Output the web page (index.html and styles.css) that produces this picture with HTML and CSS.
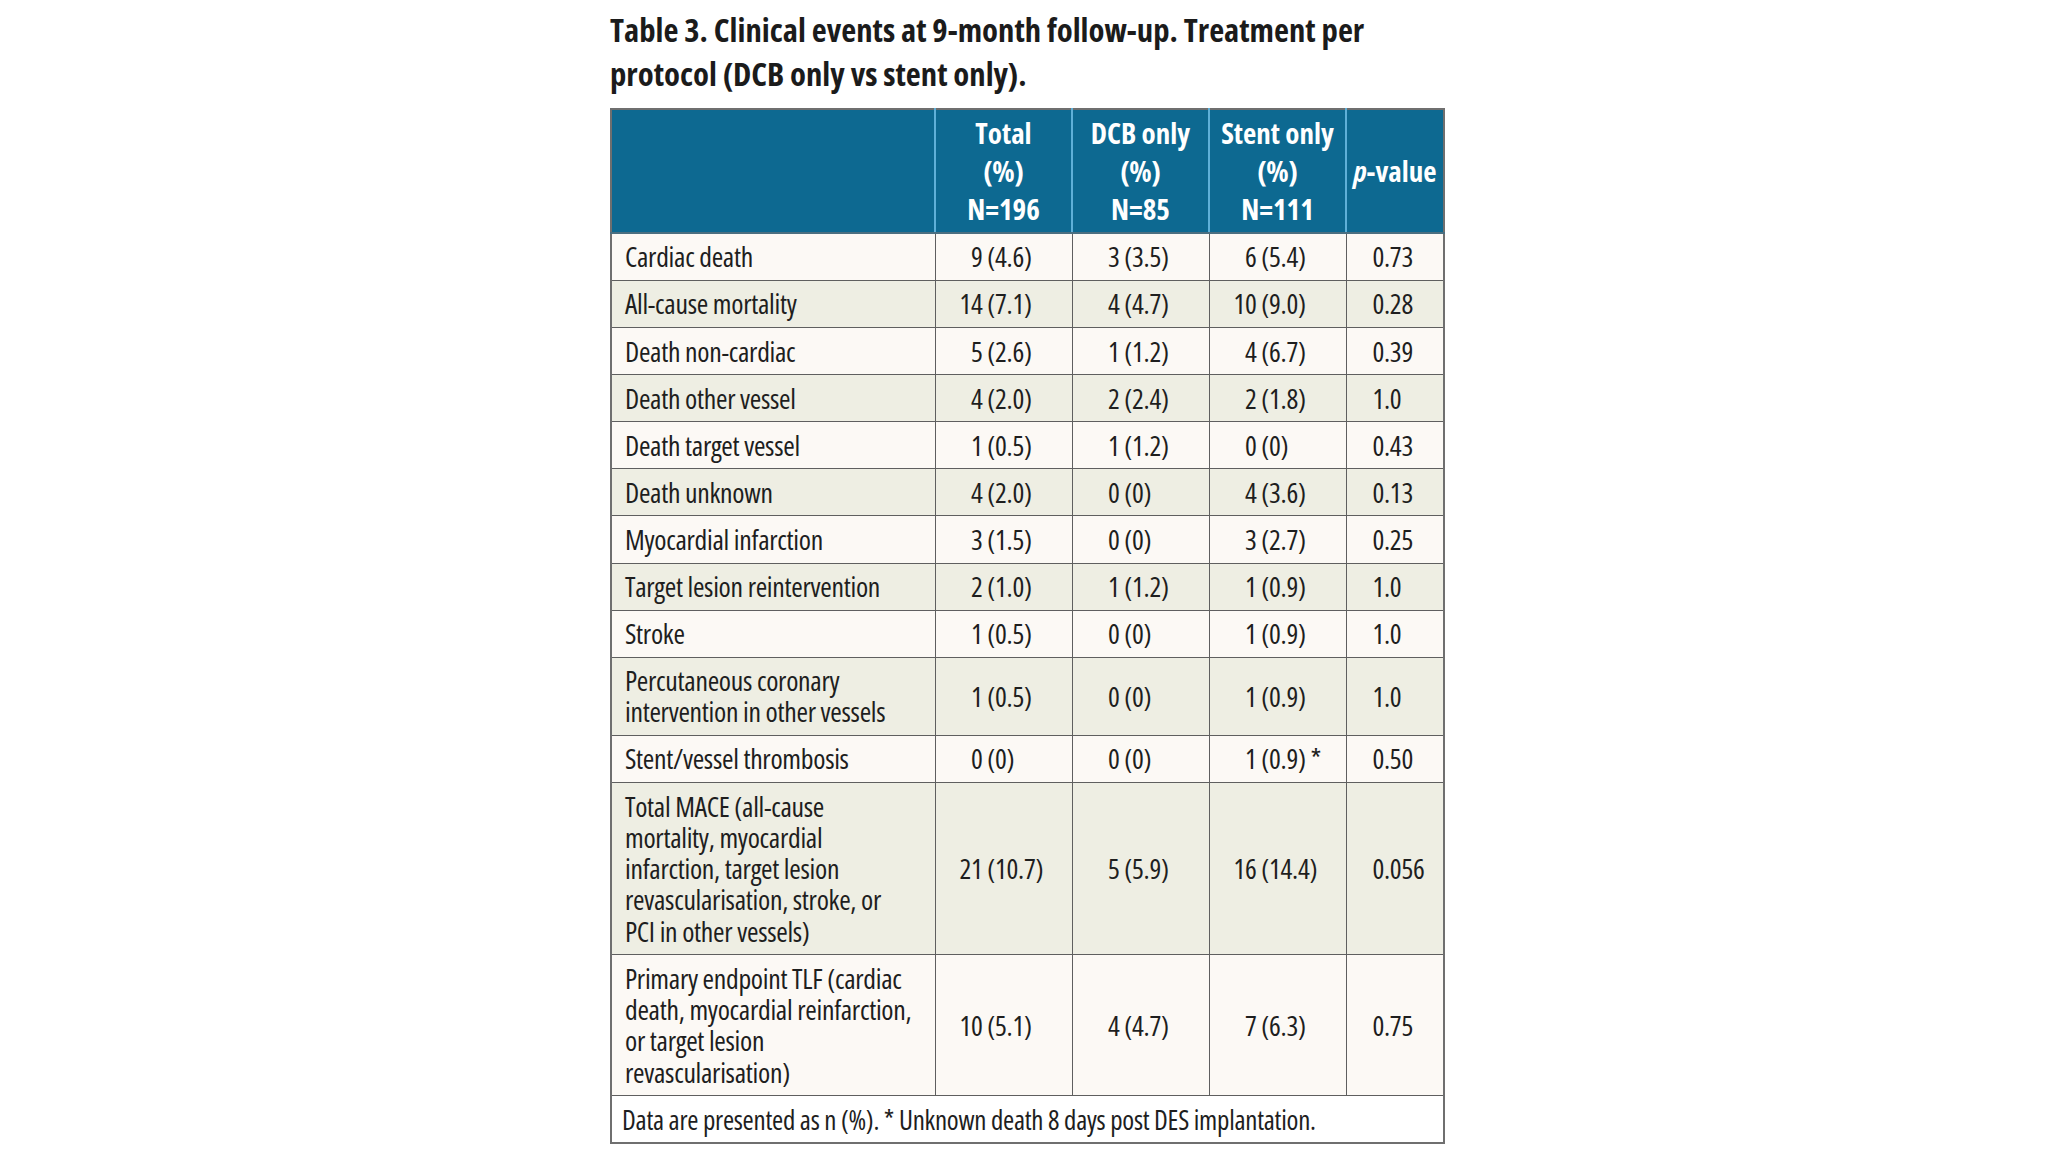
FILE: index.html
```html
<!DOCTYPE html>
<html lang="en">
<head>
<meta charset="utf-8">
<title>Table 3. Clinical events at 9-month follow-up</title>
<link rel="stylesheet" href="styles.css">
</head>
<body>
<main class="page">
  <div class="sheet">
    <h1 class="title">Table 3. Clinical events at 9-month follow-up. Treatment per<br>protocol (DCB only vs stent only).</h1>
    <table class="events">
      <colgroup>
        <col class="c-label">
        <col class="c-num">
        <col class="c-num">
        <col class="c-num">
        <col class="c-p">
      </colgroup>
      <thead>
        <tr>
          <th></th>
          <th>Total<br>(%)<br>N=196</th>
          <th>DCB only<br>(%)<br>N=85</th>
          <th>Stent only<br>(%)<br>N=111</th>
          <th><i>p</i>-value</th>
        </tr>
      </thead>
      <tbody>
        <tr class="light">
          <td class="label">Cardiac death</td>
          <td class="num"><span class="n">9</span> (4.6)</td>
          <td class="num"><span class="n">3</span> (3.5)</td>
          <td class="num"><span class="n">6</span> (5.4)</td>
          <td class="pv">0.73</td>
        </tr>
        <tr class="shade">
          <td class="label">All-cause mortality</td>
          <td class="num"><span class="n">14</span> (7.1)</td>
          <td class="num"><span class="n">4</span> (4.7)</td>
          <td class="num"><span class="n">10</span> (9.0)</td>
          <td class="pv">0.28</td>
        </tr>
        <tr class="light">
          <td class="label">Death non-cardiac</td>
          <td class="num"><span class="n">5</span> (2.6)</td>
          <td class="num"><span class="n">1</span> (1.2)</td>
          <td class="num"><span class="n">4</span> (6.7)</td>
          <td class="pv">0.39</td>
        </tr>
        <tr class="shade">
          <td class="label">Death other vessel</td>
          <td class="num"><span class="n">4</span> (2.0)</td>
          <td class="num"><span class="n">2</span> (2.4)</td>
          <td class="num"><span class="n">2</span> (1.8)</td>
          <td class="pv">1.0</td>
        </tr>
        <tr class="light">
          <td class="label">Death target vessel</td>
          <td class="num"><span class="n">1</span> (0.5)</td>
          <td class="num"><span class="n">1</span> (1.2)</td>
          <td class="num"><span class="n">0</span> (0)</td>
          <td class="pv">0.43</td>
        </tr>
        <tr class="shade">
          <td class="label">Death unknown</td>
          <td class="num"><span class="n">4</span> (2.0)</td>
          <td class="num"><span class="n">0</span> (0)</td>
          <td class="num"><span class="n">4</span> (3.6)</td>
          <td class="pv">0.13</td>
        </tr>
        <tr class="light">
          <td class="label">Myocardial infarction</td>
          <td class="num"><span class="n">3</span> (1.5)</td>
          <td class="num"><span class="n">0</span> (0)</td>
          <td class="num"><span class="n">3</span> (2.7)</td>
          <td class="pv">0.25</td>
        </tr>
        <tr class="shade">
          <td class="label">Target lesion reintervention</td>
          <td class="num"><span class="n">2</span> (1.0)</td>
          <td class="num"><span class="n">1</span> (1.2)</td>
          <td class="num"><span class="n">1</span> (0.9)</td>
          <td class="pv">1.0</td>
        </tr>
        <tr class="light">
          <td class="label">Stroke</td>
          <td class="num"><span class="n">1</span> (0.5)</td>
          <td class="num"><span class="n">0</span> (0)</td>
          <td class="num"><span class="n">1</span> (0.9)</td>
          <td class="pv">1.0</td>
        </tr>
        <tr class="shade">
          <td class="label">Percutaneous coronary<br>intervention in other vessels</td>
          <td class="num"><span class="n">1</span> (0.5)</td>
          <td class="num"><span class="n">0</span> (0)</td>
          <td class="num"><span class="n">1</span> (0.9)</td>
          <td class="pv">1.0</td>
        </tr>
        <tr class="light">
          <td class="label">Stent/vessel thrombosis</td>
          <td class="num"><span class="n">0</span> (0)</td>
          <td class="num"><span class="n">0</span> (0)</td>
          <td class="num"><span class="n">1</span> (0.9) *</td>
          <td class="pv">0.50</td>
        </tr>
        <tr class="shade">
          <td class="label">Total MACE (all-cause<br>mortality, myocardial<br>infarction, target lesion<br>revascularisation, stroke, or<br>PCI in other vessels)</td>
          <td class="num"><span class="n">21</span> (10.7)</td>
          <td class="num"><span class="n">5</span> (5.9)</td>
          <td class="num"><span class="n">16</span> (14.4)</td>
          <td class="pv">0.056</td>
        </tr>
        <tr class="light">
          <td class="label">Primary endpoint TLF (cardiac<br>death, myocardial reinfarction,<br>or target lesion<br>revascularisation)</td>
          <td class="num"><span class="n">10</span> (5.1)</td>
          <td class="num"><span class="n">4</span> (4.7)</td>
          <td class="num"><span class="n">7</span> (6.3)</td>
          <td class="pv">0.75</td>
        </tr>
      </tbody>
      <tfoot>
        <tr>
          <td class="note" colspan="5">Data are presented as n (%). * Unknown death 8 days post DES implantation.</td>
        </tr>
      </tfoot>
    </table>
  </div>
</main>
</body>
</html>
```

FILE: styles.css
```css
html, body {
  margin: 0;
  padding: 0;
  background: #ffffff;
}

body {
  font-family: "Open Sans", "DejaVu Sans Condensed", sans-serif;
  font-stretch: 75%;
  color: #1e1e1e;
}

.page {
  display: flex;
  justify-content: center;
  padding-left: 7px;
}

.sheet {
  width: 835px;
  padding-top: 8px;
}

.title {
  margin: 0 0 12px 0;
  font-size: 32.7px;
  line-height: 44px;
  font-weight: bold;
  color: #1b1b1b;
  white-space: nowrap;
}

.events {
  width: 835px;
  border-collapse: collapse;
  table-layout: fixed;
  border: 2px solid #6f6f6f;
}

.c-label { width: 324px; }
.c-num { width: 137px; }
.c-p { width: 98px; }

.events thead th {
  background: #0d6991;
  color: #ffffff;
  font-weight: bold;
  font-size: 29px;
  line-height: 38px;
  padding: 4px 2px;
  text-align: center;
  vertical-align: middle;
  border-right: 2px solid #5fb0d8;
  border-bottom: 2px solid #4b6f80;
  white-space: nowrap;
}

.events thead th:last-child {
  border-right: none;
}

.events thead th i {
  font-style: italic;
}

.events td {
  font-size: 27.8px;
  letter-spacing: -0.3px;
  line-height: 31.3px;
  padding: 7.4px 13px;
  border: 1.5px solid #5f5f5f;
  vertical-align: middle;
  color: #1e1e1e;
}

.events tr.light td {
  background: #fcf9f5;
}

.events tr.shade td {
  background: #eeeee3;
}

.events td.label {
  padding-left: 13px;
  padding-right: 4px;
  white-space: nowrap;
}

.events td.num {
  padding-left: 21px;
  padding-right: 2px;
  white-space: nowrap;
}

.events td.num .n {
  display: inline-block;
  width: 26px;
  text-align: right;
}

.events td.pv {
  padding-left: 26px;
  padding-right: 2px;
}

.events td.note {
  background: #ffffff;
  font-size: 27px;
  letter-spacing: -0.25px;
  padding-left: 10px;
  white-space: nowrap;
}
```
